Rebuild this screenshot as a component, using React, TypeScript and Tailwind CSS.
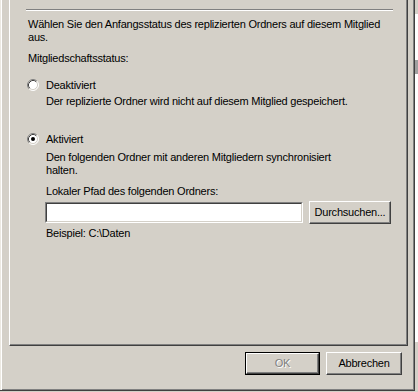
import React from "react";

function Radio({ checked }: { checked?: boolean }) {
  return (
    <svg width="12" height="12" viewBox="0 0 12 12" className="shrink-0 block">
      <circle cx="6" cy="6" r="5" fill="#ffffff" />
      <path d="M2.11 9.89 A5.5 5.5 0 0 1 9.89 2.11" fill="none" stroke="#808080" strokeWidth="1" />
      <path d="M9.89 2.11 A5.5 5.5 0 0 1 2.11 9.89" fill="none" stroke="#ffffff" strokeWidth="1" />
      <path d="M2.82 9.18 A4.5 4.5 0 0 1 9.18 2.82" fill="none" stroke="#404040" strokeWidth="1" />
      <path d="M9.18 2.82 A4.5 4.5 0 0 1 2.82 9.18" fill="none" stroke="#d4d0c8" strokeWidth="1" />
      {checked && <circle cx="6" cy="6" r="2" fill="#000000" />}
    </svg>
  );
}

function Button({
  children,
  width,
  isDefault,
  disabled,
}: {
  children: React.ReactNode;
  width: string;
  isDefault?: boolean;
  disabled?: boolean;
}) {
  const inner = (
    <div className="flex h-full w-full items-center justify-center border border-t-white border-l-white border-r-[#404040] border-b-[#404040] shadow-[inset_-1px_-1px_0_#808080]">
      <span
        className={
          disabled
            ? "text-[#808080] [text-shadow:1px_1px_0_#ffffff]"
            : "text-black"
        }
      >
        {children}
      </span>
    </div>
  );
  if (isDefault) {
    return (
      <div className={`${width} h-[23px] border border-black`}>{inner}</div>
    );
  }
  return <div className={`${width} h-[23px]`}>{inner}</div>;
}

export default function App() {
  return (
    <div className="flex h-[392px] w-[418px] overflow-hidden bg-[#d4d0c8] font-['Liberation_Sans',Arial,sans-serif] text-[11px] leading-[13px] tracking-[-0.22px] text-black">
      <div className="flex h-[391px] w-[415px] shrink-0 flex-col border-r border-b border-r-[#404040] border-b-[#404040] shadow-[inset_1px_0_0_#ece9e2,inset_2px_0_0_#ffffff,inset_-1px_-1px_0_#808080]">
        <div className="ml-[9px] flex h-[346px] w-[399px] flex-col border-l border-r border-b border-l-white border-r-[#404040] border-b-[#404040] shadow-[inset_-1px_-1px_0_#808080]">
          <div className="mt-[9px] ml-[16px] h-[2px] w-[367px] border-t border-b border-t-[#808080] border-b-white" />
          <p className="mt-[7px] ml-[18px]">
            Wählen Sie den Anfangsstatus des replizierten Ordners auf diesem Mitglied
            <br />
            aus.
          </p>
          <p className="mt-[8px] ml-[18px]">Mitgliedschaftsstatus:</p>
          <div className="mt-[14px] ml-[17px] flex h-[13px] items-start">
            <Radio />
            <span className="ml-[7px]">Deaktiviert</span>
          </div>
          <p className="mt-[3px] ml-[36px]">
            Der replizierte Ordner wird nicht auf diesem Mitglied gespeichert.
          </p>
          <div className="mt-[25px] ml-[17px] flex h-[13px] items-start">
            <Radio checked />
            <span className="ml-[7px]">Aktiviert</span>
          </div>
          <p className="mt-[5px] ml-[36px]">
            Den folgenden Ordner mit anderen Mitgliedern synchronisiert
            <br />
            halten.
          </p>
          <p className="mt-[8px] ml-[36px]">Lokaler Pfad des folgenden Ordners:</p>
          <div className="mt-[3px] ml-[35px] flex items-start">
            <div className="mt-[1px] h-[21px] w-[258px] border border-t-[#808080] border-l-[#808080] border-r-white border-b-white">
              <div className="h-full w-full border border-t-[#404040] border-l-[#404040] border-r-[#d4d0c8] border-b-[#d4d0c8] bg-white" />
            </div>
            <div className="ml-[6px]">
              <Button width="w-[82px]">Durchsuchen...</Button>
            </div>
          </div>
          <p className="mt-[3px] ml-[36px]">{"Beispiel: C:\\Daten"}</p>
        </div>
        <div className="mt-[6px] flex justify-end gap-[6px] pr-[12px]">
          <Button width="w-[75px]" isDefault disabled>
            OK
          </Button>
          <Button width="w-[76px]">Abbrechen</Button>
        </div>
      </div>
      <div className="flex h-full w-[3px] flex-col">
        <div className="h-[14px] bg-[#d4d0c8]" />
        <div className="h-[46px] bg-white" />
        <div className="h-[14px] bg-[#a0a0a0]" />
        <div className="h-[268px] bg-white" />
        <div className="flex-1 bg-[#d4d0c8]" />
      </div>
    </div>
  );
}
